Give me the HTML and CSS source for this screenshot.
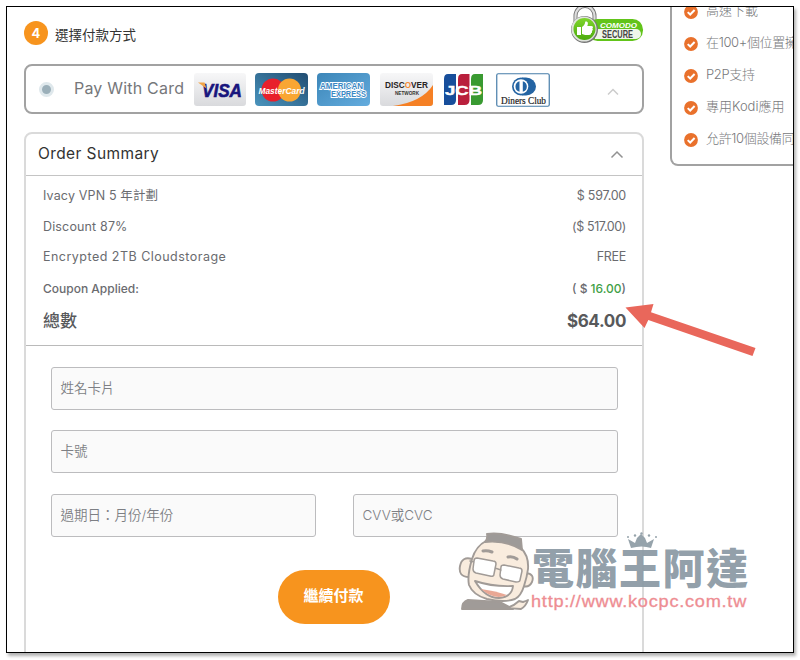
FILE: index.html
```html
<!DOCTYPE html>
<html lang="zh-Hant">
<head>
<meta charset="utf-8">
<title>Ivacy VPN</title>
<link rel="stylesheet" href="styles.css">
</head>
<body>
<svg class="defs" width="0" height="0" aria-hidden="true">
  <symbol id="check" viewBox="0 0 14 14"><circle cx="7" cy="7" r="6.9" fill="#e9712c"/><path d="M3.7 7.1 6.2 9.5 10.6 5" fill="none" stroke="#fff" stroke-width="2"/></symbol>
</svg>
<div class="frame">
  <main class="checkout">
    <header class="step">
      <span class="num">4</span>
      <h1>選擇付款方式</h1>
      <svg class="comodo" width="76" height="40" viewBox="0 0 76 40">
        <defs><linearGradient id="gr" x2="0" y2="1"><stop stop-color="#7fd52c"/><stop offset="1" stop-color="#4cab0d"/></linearGradient></defs>
        <path d="M6.500 19V11a9.500 10 0 0 1 19 0v8" fill="none" stroke="#777" stroke-width="4"/>
        <path d="M6.500 19V11a9.500 10 0 0 1 19 0v8" fill="none" stroke="#ddd" stroke-width="2.200"/>
        <rect x="18" y="14" width="56" height="22" rx="10.500" fill="#62c41a"/>
        <path d="M26 24H67a5 5 0 0 1 0 10H26z" fill="#f0f6ea"/>
        <circle cx="15.500" cy="24.500" r="13.500" fill="#777"/><circle cx="15" cy="24" r="12.600" fill="#dfe3dc"/><circle cx="15.500" cy="24" r="11" fill="url(#gr)"/>
        <path d="M8 22h4v8H8zM13 22c2-1 3-3 3.300-5.500 3-.5 3 2 2 4.500h4c2 0 2 2 1 2.500 1 1 .4 2-.4 2.400.5 1 0 2-.8 2.200 0 1.400-.6 1.900-2 1.900h-4L13 29z" fill="#fff"/>
        <text x="31" y="22.500" textLength="37" lengthAdjust="spacingAndGlyphs" font-size="7.500" font-weight="bold" font-style="italic" fill="#fff">COMODO</text>
        <text x="33" y="32.500" textLength="31" lengthAdjust="spacingAndGlyphs" font-size="10" font-weight="bold" fill="#444">SECURE</text>
      </svg>
    </header>

    <section class="method">
      <span class="radio"></span>
      <span class="method-name">Pay With Card</span>
      <svg class="visa" width="52" height="33" viewBox="0 0 52 33"><defs><linearGradient id="vg" x2="0" y2="1"><stop stop-color="#f7f7f8"/><stop offset="1" stop-color="#d9dadd"/></linearGradient></defs><rect width="52" height="33" rx="3" fill="url(#vg)"/><text x="8" y="24" textLength="40" lengthAdjust="spacingAndGlyphs" font-size="19" font-weight="bold" font-style="italic" fill="#18157d" stroke="#18157d" stroke-width=".6">VISA</text><path d="M4 9.500h6.500l2 6z" fill="#f1a446"/></svg>
      <svg class="mc" width="53" height="33" viewBox="0 0 53 33"><defs><linearGradient id="mg" x1="1" x2="0" y2="1"><stop stop-color="#214d72"/><stop offset="1" stop-color="#4a94bd"/></linearGradient></defs><rect width="53" height="33" rx="4" fill="url(#mg)"/><circle cx="18" cy="17" r="11.500" fill="#e8202b"/><circle cx="34.500" cy="17" r="11.500" fill="#f9a633"/><text x="3.500" y="20.500" textLength="46" lengthAdjust="spacingAndGlyphs" font-size="9.500" font-weight="bold" font-style="italic" fill="#fff">MasterCard</text></svg>
      <svg class="amex" width="53" height="33" viewBox="0 0 53 33"><defs><linearGradient id="ag" x2="1" y1="0" y2="1"><stop stop-color="#3c86b8"/><stop offset="1" stop-color="#64acde"/></linearGradient></defs><rect width="53" height="33" rx="4" fill="url(#ag)"/><g font-size="8.500" font-weight="bold" fill="#3a88c4" stroke="#fff" stroke-width="1.900" paint-order="stroke"><text x="3" y="15.500" textLength="43" lengthAdjust="spacingAndGlyphs">AMERICAN</text><text x="14" y="24" textLength="35" lengthAdjust="spacingAndGlyphs">EXPRESS</text></g></svg>
      <svg class="disc" width="53" height="33" viewBox="0 0 53 33"><rect width="53" height="33" rx="3" fill="url(#vg)"/><path d="M53 12v18q0 3-3 3H13Q42 29 53 12z" fill="#f58025"/><g font-size="9.500" font-weight="bold" fill="#272222"><text x="5" y="15" textLength="43" lengthAdjust="spacingAndGlyphs">DISC<tspan fill="#f58b35">O</tspan>VER</text></g><text x="15" y="22" textLength="24" lengthAdjust="spacingAndGlyphs" font-size="5" font-weight="bold" fill="#333">NETWORK</text></svg>
      <svg class="jcb" width="39" height="31" viewBox="0 0 39 31"><path d="M4 0h8v26q0 5-5 5H0V5q0-5 4-5z" fill="#174e9b"/><path d="M18 0h7.500v26q0 5-5 5H14V5q0-5 4-5z" fill="#b91f3c"/><path d="M31 0h8v26q0 5-5 5h-7V5q0-5 4-5z" fill="#399a31"/><text x="1" y="20.500" textLength="37" lengthAdjust="spacingAndGlyphs" font-size="13" font-weight="bold" fill="#fff" stroke="#fff" stroke-width=".4">JCB</text></svg>
      <svg class="diners" width="54" height="34" viewBox="0 0 54 34"><rect x=".75" y=".75" width="52.500" height="32.500" rx="1.500" fill="#fff" stroke="#477da9" stroke-width="1.200"/><path d="M26 4.500h4a10 9 0 0 1 0 18h-4z" fill="#2464a3"/><circle cx="25" cy="13.500" r="9" fill="#2464a3"/><circle cx="25" cy="13.500" r="7.300" fill="#fff"/><path d="M23.500 8.200v10.600a5.500 5.500 0 0 1 0-10.600zM26.800 8.200v10.600a5.500 5.500 0 0 0 0-10.600z" fill="#2464a3"/><text class="serif" x="5" y="30.500" textLength="45" lengthAdjust="spacingAndGlyphs" font-size="10" fill="#222" stroke="#222" stroke-width=".2">Diners Club</text></svg>
      <svg class="chev pale" width="12" height="8" viewBox="0 0 12 8"><path d="M1 6.500 6 1.500 11 6.500"/></svg>
    </section>

    <section class="panel">
      <div class="panel-head"><h2>Order Summary</h2><svg class="chev" width="14" height="9" viewBox="0 0 14 9"><path d="M1.500 7.500 7 2 12.500 7.500"/></svg></div>
      <div class="rows">
        <div class="row plan"><span>Ivacy VPN 5 年計劃</span><span>$ 597.00</span></div>
        <div class="row discount"><span>Discount 87%</span><span>($ 517.00)</span></div>
        <div class="row storage"><span>Encrypted 2TB Cloudstorage</span><span>FREE</span></div>
        <div class="row coupon"><span>Coupon Applied:</span><span>( $ <b>16.00</b>)</span></div>
        <div class="row total"><span>總數</span><span>$64.00</span></div>
      </div>
      <form class="form">
        <div class="field wide">姓名卡片</div>
        <div class="field wide">卡號</div>
        <div class="field">過期日：月份/年份</div>
        <div class="field">CVV或CVC</div>
        <button type="button" class="pay">繼續付款</button>
      </form>
    </section>
  </main>

  <aside class="features">
    <ul>
      <li><svg><use href="#check"/></svg><span>高速下載</span></li>
      <li><svg><use href="#check"/></svg><span class="tight">在100+個位置擁有</span></li>
      <li><svg><use href="#check"/></svg><span class="tight">P2P支持</span></li>
      <li><svg><use href="#check"/></svg><span>專用Kodi應用</span></li>
      <li><svg><use href="#check"/></svg><span class="tight">允許10個設備同時</span></li>
    </ul>
  </aside>

  <svg class="arrow" width="132" height="56" viewBox="624 301 132 56"><path d="M625.500 307.500 653.500 304 651 312.300 755.500 348 752.500 356 648.300 320 644.500 328z" fill="#e9675b"/></svg>

  <svg class="mark" width="296" height="84" viewBox="456 530 296 84">
    <g stroke="#a19b97" stroke-width="1.900" stroke-linejoin="round" stroke-linecap="round">
      <path d="M462 609q0-7 6-9l32 2 13 7z" fill="#a09b98"/>
      <path d="M506 608q8-2 13-7l4 1q3-1 5-2-2 6-7 9z" fill="#f9ecde"/>
      <path d="M472 559q-10-3-12 7-2 11 9 11M526 573q9 1 6 9-3 6-9 4" fill="#f9ecde"/>
      <path d="M472 559Q476 546 486 541q18-5 35 7 8 8 7 21-1 8-4 17-3 10-9 13-11 4-28 0-14-4-18-14-2-9 3-26z" fill="#f9ecde"/>
      <path d="M485 542q3-3 2-8 15-2 34 5l1 11q-15-10-37-8z" fill="#9d9a98"/>
      <path d="M483 551q4-1 9 1M508 557q5-1 9 2" fill="none" stroke-width="3"/>
      <path d="M477 558l16 3q3 0 3 3l-2 10q0 3-4 2l-14-3q-3-1-3-4l1-8q0-3 3-3zM504 565l15 3q3 0 3 3l-2 9q0 2-4 2l-13-3q-3-1-3-4l1-8q0-2 3-2zM495 568l6 2M470 561l4 1" fill="#fff" stroke-width="1.500"/>
      <path d="M475 581q18 6 38 5-1 11-14 12-14 0-24-17z" fill="#fff"/>
      <path d="M481 589q15 2 26 6-12 6-26-6z" fill="#e9a895" stroke="none"/>
    </g>
    <path d="M628 539l7 4 2-5 4-4 4 4 2 5 7-4-3 9q-9-3-20 0z" fill="#96a3ab"/>
    <g fill="#96a3ab"><circle cx="628" cy="537" r="1"/><circle cx="635" cy="535.500" r="1.200"/><circle cx="641.500" cy="533.500" r="1.200"/><circle cx="649" cy="535.500" r="1.200"/><circle cx="656" cy="537" r="1"/></g>
    <text x="532" y="583.500" textLength="216" font-family="Noto Sans CJK TC" font-size="42" font-weight="900" fill="#8c9aa5" fill-opacity=".94">電腦王阿達</text>
    <text x="531" y="606.500" textLength="216" lengthAdjust="spacingAndGlyphs" letter-spacing=".7" font-family="Liberation Sans" font-size="17" fill="#ee8d93" stroke="#ee8d93" stroke-width=".3">http://www.kocpc.com.tw</text>
  </svg>
</div>
</body>
</html>
```
FILE: styles.css
```css
* { box-sizing: border-box; }
body {
  margin: 0;
  height: 660px;
  padding: 6px;
  background: #fff;
  overflow: hidden;
  font-family: Inter, "Noto Sans CJK TC", sans-serif;
  color: #6a6b6f;
}
h1, h2, ul { margin: 0; padding: 0; list-style: none; }
svg { flex: none; display: block; }
.defs { position: absolute; }
.frame {
  position: relative;
  width: 788px;
  height: 647px;
  border: 1px solid #000;
  box-shadow: 2px 3px 3px rgba(0, 0, 0, .3);
  overflow: hidden;
  display: flex;
  gap: 26px;
  padding-left: 17px;
}
.checkout { width: 620px; flex: none; }

.step { display: flex; align-items: center; height: 57px; padding-bottom: 5px; }
.num {
  width: 24px;
  height: 24px;
  border-radius: 50%;
  background: #f7941e;
  color: #fff;
  font-size: 13px;
  font-weight: 700;
  line-height: 24px;
  text-align: center;
}
h1 { margin: 3px 0 0 7px; font-size: 13.5px; font-weight: 400; line-height: 20px; color: #333; }
.comodo { margin: -16px -1px 0 auto; }
.comodo text, .method text { font-family: "Liberation Sans", sans-serif; }
.method .serif { font-family: "Liberation Serif", serif; }

.method {
  height: 50px;
  border: 2px solid #a2a2a2;
  border-radius: 8px;
  display: flex;
  align-items: center;
  padding-left: 13px;
}
.radio { width: 15px; height: 15px; border-radius: 50%; border: 3px solid #dfe8ec; background: #9bafb9; margin-top: 1px; }
.method-name { width: 120px; margin: -3px 0 0 20px; font-size: 16px; line-height: 22px; color: #76777a; white-space: nowrap; letter-spacing: .2px; }
.mc { margin-left: 9px; }
.amex { margin-left: 9px; }
.disc { margin-left: 10px; }
.jcb { margin-left: 11px; }
.diners { margin: 1px 0 0 13px; }
.chev path { fill: none; stroke: #929292; stroke-width: 1.5; }
.chev.pale { margin: 5px 0 0 57px; }
.chev.pale path { stroke: #ccc; }

.panel {
  margin-top: 18px;
  height: 540px;
  border: 2px solid #dadada;
  border-radius: 8px 8px 0 0;
}
.panel-head {
  height: 42px;
  display: flex;
  align-items: center;
  justify-content: space-between;
  padding: 0 18px 1px 12px;
  border-bottom: 1px solid #c4c4c4;
}
h2 { margin-top: -1px; font-size: 15.5px; line-height: 20px; font-weight: 400; color: #333; letter-spacing: .4px; }
.rows { height: 170px; padding: 5px 16px 0 17px; border-bottom: 1px solid #bababa; }
.row { display: flex; justify-content: space-between; align-items: center; height: 30.5px; font-size: 12.5px; line-height: 18px; white-space: nowrap; }
.row b { color: #3fa047; font-weight: 500; }
.plan span:first-child { letter-spacing: .15px; }
.plan span:last-child { letter-spacing: -.25px; }
.discount span:first-child { letter-spacing: .15px; }
.discount span:last-child { letter-spacing: -.4px; }
.storage span:first-child { letter-spacing: .48px; }
.storage span:last-child { letter-spacing: -.3px; }
.coupon { height: 33px; font-size: 12px; font-weight: 500; }
.total { font-size: 17px; font-weight: 700; height: 30px; color: #58595b; }
.total span:first-child { font-weight: 500; }
.total span:last-child { letter-spacing: -.35px; }

.form {
  display: grid;
  grid-template-columns: 265px 265px;
  grid-template-rows: 43px 43px 43px 54px;
  column-gap: 37px;
  row-gap: 20.3px;
  padding: 21px 0 0 25px;
}
.field {
  border: 1px solid #bcbcbe;
  border-radius: 3px;
  background: #fafafa;
  padding: 0 8.5px;
  font-size: 13.5px;
  line-height: 40px;
  font-weight: 350;
  color: #7d7f84;
}
.wide { grid-column: 1 / -1; }
.pay {
  grid-column: 1 / -1;
  justify-self: center;
  width: 112px;
  height: 54px;
  margin: 13px 2px 0 0;
  padding: 0 0 5px;
  border: 0;
  border-radius: 27px;
  background: #f7941e;
  color: #fff;
  font: 700 15px "Noto Sans CJK TC", sans-serif;
}

.features {
  flex: none;
  width: 180px;
  height: 159px;
  border: 2px solid #a2a2a2;
  border-top: 0;
  border-radius: 0 0 0 8px;
  padding: 0 0 0 12px;
}
.features ul { margin-top: -11px; }
.features li { display: flex; align-items: center; height: 32px; font-size: 13px; font-weight: 300; color: #77787b; white-space: nowrap; }
.features li svg { width: 14px; height: 14px; }
.features li span { margin: -5px 0 0 8px; }
.features .tight { letter-spacing: -.35px; }

.arrow { position: absolute; left: 617px; top: 294px; }
.mark { position: absolute; left: 449px; top: 523px; }
```
